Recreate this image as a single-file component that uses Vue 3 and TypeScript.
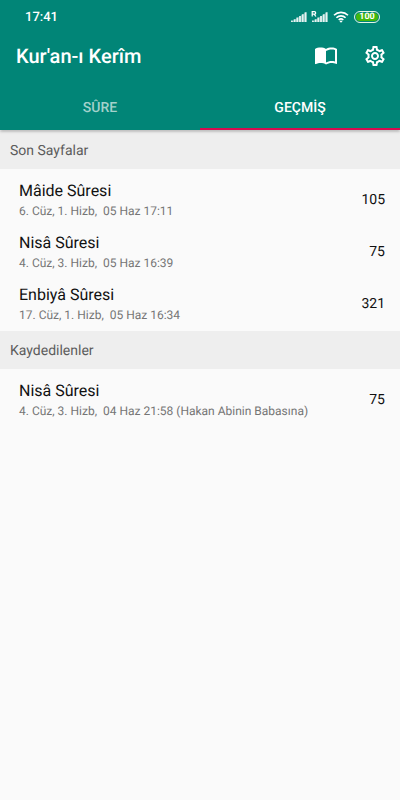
<script setup lang="ts">
import { ref } from 'vue'

interface Entry {
  id: number
  name: string
  detail: string
  page: number
}

interface Section {
  title: string
  entries: Entry[]
}

const activeTab = ref('history')

const tabs = [
  { id: 'surah', label: 'SÛRE' },
  { id: 'history', label: 'GEÇMİŞ' },
]

const sections: Section[] = [
  {
    title: 'Son Sayfalar',
    entries: [
      { id: 1, name: 'Mâide Sûresi', detail: '6. Cüz, 1. Hizb,  05 Haz 17:11', page: 105 },
      { id: 2, name: 'Nisâ Sûresi', detail: '4. Cüz, 3. Hizb,  05 Haz 16:39', page: 75 },
      { id: 3, name: 'Enbiyâ Sûresi', detail: '17. Cüz, 1. Hizb,  05 Haz 16:34', page: 321 },
    ],
  },
  {
    title: 'Kaydedilenler',
    entries: [
      { id: 4, name: 'Nisâ Sûresi', detail: '4. Cüz, 3. Hizb,  04 Haz 21:58 (Hakan Abinin Babasına)', page: 75 },
    ],
  },
]
</script>

<template>
  <div class="app">
    <header class="header">
      <div class="status">
        <time class="clock">17:41</time>
        <div class="indicators">
          <svg width="16" height="12" viewBox="0 0 16 12" aria-hidden="true">
            <path d="M0 11L15.5 1v10z" fill="#fff" opacity=".35" />
            <path d="M0 9.6h1.8V11H0zM2.7 8.2h1.8V11H2.7zM5.4 6.6h1.8V11H5.4zM8.1 5h1.8v6H8.1zM10.8 3.2h1.8V11h-1.8zM13.6 1.2h1.9V11h-1.9z" fill="#fff" opacity=".85" />
          </svg>
          <svg width="17" height="12" viewBox="0 0 17 12" aria-hidden="true">
            <path d="M1.2 5.5V.6h2.2a1.3 1.3 0 0 1 0 2.6H1.2M3.2 3.2L4.9 5.5" fill="none" stroke="#fff" stroke-width="1.2" />
            <path d="M1 11L16.5 1v10z" fill="#fff" opacity=".35" />
            <path d="M1 9.6h1.8V11H1zM3.7 8.2h1.8V11H3.7zM6.4 6.6h1.8V11H6.4zM9.1 5h1.8v6H9.1zM11.8 3.2h1.8V11h-1.8zM14.6 1.2h1.9V11h-1.9z" fill="#fff" opacity=".85" />
          </svg>
          <svg class="wifi" width="16" height="12" viewBox="0 0 16 12" aria-hidden="true">
            <path d="M1 4.2a10 10 0 0 1 14 0M3.4 6.7a6.6 6.6 0 0 1 9.2 0M5.7 9a3.4 3.4 0 0 1 4.6 0" fill="none" stroke="#fff" stroke-width="1.6" />
            <path d="M6.5 10.2a2.2 2.2 0 0 1 3 0L8 11.8z" fill="#fff" />
          </svg>
          <span class="battery"><span class="level">100</span></span>
        </div>
      </div>
      <div class="toolbar">
        <h1 class="title">Kur'an-ı Kerîm</h1>
        <div class="actions">
          <button class="action" type="button" aria-label="Oku">
            <svg width="24" height="24" viewBox="0 1 24 24" aria-hidden="true">
              <path d="M21 5c-1.11-.35-2.33-.5-3.5-.5-1.95 0-4.05.4-5.5 1.5-1.45-1.1-3.55-1.5-5.5-1.5S2.45 4.9 1 6v14.65c0 .25.25.5.5.5.1 0 .15-.05.25-.05C3.1 20.45 5.05 20 6.5 20c1.95 0 4.05.4 5.5 1.5 1.35-.85 3.8-1.5 5.5-1.5 1.65 0 3.35.3 4.75 1.05.1.05.15.05.25.05.25 0 .5-.25.5-.5V6c-.6-.45-1.25-.75-2-1zm0 13.5c-1.1-.35-2.3-.5-3.5-.5-1.7 0-4.15.65-5.5 1.5V8c1.35-.85 3.8-1.5 5.5-1.5 1.2 0 2.4.15 3.5.5v11.5z" fill="#fff" />
            </svg>
          </button>
          <button class="action" type="button" aria-label="Ayarlar">
            <svg width="24" height="24" viewBox="0 0 24 24" aria-hidden="true">
              <path d="M19.43 12.98c.04-.32.07-.64.07-.98 0-.34-.03-.66-.07-.98l2.11-1.65c.19-.15.24-.42.12-.64l-2-3.46c-.09-.16-.26-.25-.44-.25-.06 0-.12.01-.17.03l-2.49 1c-.52-.4-1.08-.73-1.69-.98l-.38-2.65C14.46 2.18 14.25 2 14 2h-4c-.25 0-.46.18-.49.42l-.38 2.65c-.61.25-1.17.59-1.69.98l-2.49-1c-.06-.02-.12-.03-.18-.03-.17 0-.34.09-.43.25l-2 3.46c-.13.22-.07.49.12.64l2.11 1.65c-.04.32-.07.65-.07.98 0 .33.03.66.07.98l-2.11 1.65c-.19.15-.24.42-.12.64l2 3.46c.09.16.26.25.44.25.06 0 .12-.01.17-.03l2.49-1c.52.4 1.08.73 1.69.98l.38 2.65c.03.24.24.42.49.42h4c.25 0 .46-.18.49-.42l.38-2.65c.61-.25 1.17-.59 1.69-.98l2.49 1c.06.02.12.03.18.03.17 0 .34-.09.43-.25l2-3.46c.12-.22.07-.49-.12-.64l-2.11-1.65zm-1.98-1.71c.04.31.05.52.05.73 0 .21-.02.43-.05.73l-.14 1.13.89.7 1.08.84-.7 1.21-1.27-.51-1.04-.42-.9.68c-.43.32-.84.56-1.25.73l-1.06.43-.16 1.13-.2 1.35h-1.4l-.19-1.35-.16-1.13-1.06-.43c-.43-.18-.83-.41-1.23-.71l-.91-.7-1.06.43-1.27.51-.7-1.21 1.08-.84.89-.7-.14-1.13c-.03-.31-.05-.54-.05-.74s.02-.43.05-.73l.14-1.13-.89-.7-1.08-.84.7-1.21 1.27.51 1.04.42.9-.68c.43-.32.84-.56 1.25-.73l1.06-.43.16-1.13.2-1.35h1.39l.19 1.35.16 1.13 1.06.43c.43.18.83.41 1.23.71l.91.7 1.06-.43 1.27-.51.7 1.21-1.07.85-.89.7.14 1.13zM12 8c-2.21 0-4 1.79-4 4s1.79 4 4 4 4-1.79 4-4-1.79-4-4-4zm0 6c-1.1 0-2-.9-2-2s.9-2 2-2 2 .9 2 2-.9 2-2 2z" fill="#fff" />
            </svg>
          </button>
        </div>
      </div>
      <nav class="tabs" role="tablist">
        <button
          v-for="tab in tabs"
          :key="tab.id"
          class="tab"
          :class="{ active: activeTab === tab.id }"
          type="button"
          role="tab"
          :aria-selected="activeTab === tab.id"
          @click="activeTab = tab.id"
        >
          {{ tab.label }}
        </button>
      </nav>
    </header>
    <main class="content">
      <section v-for="section in sections" :key="section.title">
        <h2 class="section-title">{{ section.title }}</h2>
        <ul class="list">
          <li v-for="entry in section.entries" :key="entry.id" class="row">
            <div class="info">
              <span class="name">{{ entry.name }}</span>
              <span class="detail">{{ entry.detail }}</span>
            </div>
            <span class="page">{{ entry.page }}</span>
          </li>
        </ul>
      </section>
    </main>
  </div>
</template>

<style>
body {
  background: #fafafa;
}
</style>

<style scoped>
.app {
  min-height: 100vh;
  background: #fafafa;
  color: #111;
  font-family: Roboto, "Liberation Sans", sans-serif;
  text-rendering: geometricPrecision;
}

.header {
  position: relative;
  background: #018577;
  color: #fff;
  box-shadow: 0 1px 3px rgba(0, 0, 0, 0.35);
}

.status {
  display: flex;
  align-items: center;
  justify-content: space-between;
  height: 34px;
  padding: 0 20px 0 25px;
}

.clock {
  font-size: 13px;
  font-weight: 500;
  line-height: 18px;
  padding-top: 2px;
}

.indicators {
  display: flex;
  align-items: center;
  gap: 4px;
}

.wifi {
  margin-left: 1px;
}

.battery {
  display: flex;
  box-sizing: border-box;
  width: 26px;
  height: 12px;
  padding: 1px;
  margin-left: 1px;
  border: 1px solid #e6f5e6;
  border-radius: 6px;
}

.level {
  flex: 1;
  border-radius: 4px;
  background: #43b80c;
  font-size: 9px;
  font-weight: 700;
  line-height: 8px;
  text-align: center;
}

.toolbar {
  display: flex;
  align-items: center;
  justify-content: space-between;
  height: 44px;
  padding: 0 13px 0 16px;
}

.title {
  margin: 0;
  font-size: 20px;
  font-weight: 500;
  line-height: 24px;
}

.actions {
  display: flex;
  gap: 25px;
}

.action {
  display: flex;
  padding: 0;
  border: 0;
  background: none;
}

.tabs {
  display: flex;
  height: 52px;
}

.tab {
  flex: 1;
  padding: 10px 0 0;
  border: 0;
  border-bottom: 2px solid transparent;
  background: none;
  color: #a3d1cb;
  font-family: inherit;
  font-size: 14px;
  font-weight: 500;
  text-rendering: inherit;
}

.tab.active {
  border-bottom-color: #d30c50;
  color: #fff;
}

.content {
  padding-top: 1px;
}

.section-title {
  margin: 0;
  padding: 11px 10px 9px;
  background: #eee;
  color: #5c5c5c;
  font-size: 14px;
  font-weight: 400;
  line-height: 18px;
}

.list {
  margin: 0;
  padding: 5px 0 1px;
  list-style: none;
}

.row {
  display: flex;
  align-items: center;
  justify-content: space-between;
  height: 52px;
  padding: 0 15px 0 19px;
}

.info {
  display: flex;
  flex-direction: column;
}

.name {
  font-size: 16px;
  line-height: 22px;
}

.detail {
  color: #757575;
  font-size: 12px;
  line-height: 18px;
  white-space: pre-wrap;
}

.page {
  font-size: 14px;
  line-height: 20px;
}
</style>
